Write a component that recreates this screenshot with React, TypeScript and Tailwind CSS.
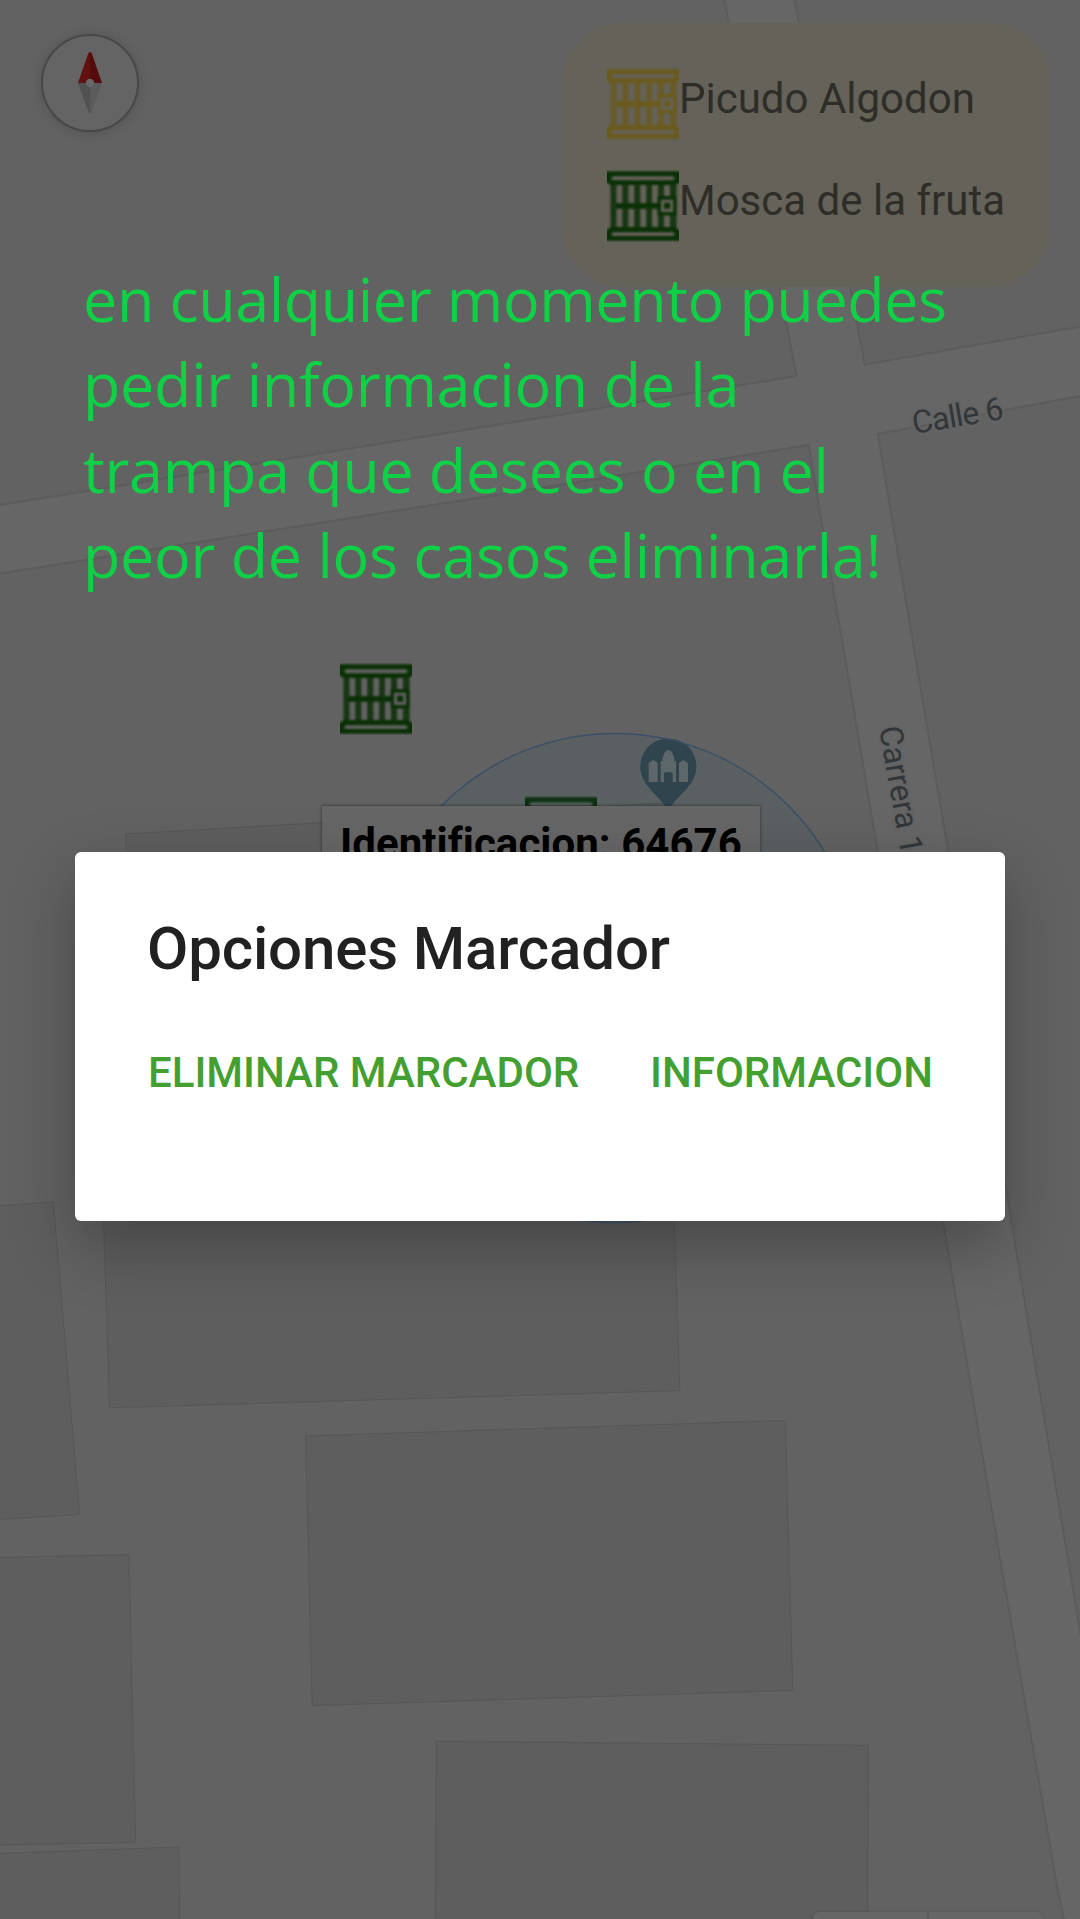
import React from 'react';

const BUILDINGS = [
  '125.4,834 662,803 680,1100 141,1131',
  '-5,1206 53.4,1202 79.5,1514.3 -5,1519.5',
  '97,1010 667,1000 679.8,1390.6 109.5,1407.8',
  '305.5,1436 785.2,1420.5 792.8,1690.4 312.3,1705.6',
  '-5,1557.6 128.8,1554.6 135.7,1842.5 -5,1845',
  '-5,1853.6 178.7,1847 180,1925 -5,1925',
  '436.3,1741.3 868.5,1745.3 867.5,1925 435.3,1925',
];

const ROAD_EDGES = [
  'M-5,505.8 L540,418 L796.5,376 L779.3,287 L724.4,0 L723,-8',
  'M793,-8 L794.4,0 L850,287 L864.7,364.7 L1085,325.6',
  'M-5,574.4 L540,488 L808.6,445 L835,600 L852.3,700 L877.7,852 L943,1221 L1000.6,1562 L1056,1880 L1065,1925',
  'M1085,395 L877.8,434 L905.7,600 L922.7,700 L948.3,852 L1006.6,1190 L1011.4,1221 L1025.5,1307 L1082,1643',
];

const ROAD_FILL =
  'M-5,505.8 L540,418 L796.5,376 L779.3,287 L724.4,0 L723,-8 L793,-8 L794.4,0 L850,287 L864.7,364.7 L1085,325.6 L1085,395 L877.8,434 L905.7,600 L922.7,700 L948.3,852 L1006.6,1190 L1011.4,1221 L1025.5,1307 L1082,1643 L1082,1925 L1065,1925 L1056,1880 L1000.6,1562 L943,1221 L877.7,852 L852.3,700 L835,600 L808.6,445 L540,488 L-5,574.4 Z';

function CityMap() {
  return (
    <svg className="absolute inset-0" width="1080" height="1919" viewBox="0 0 1080 1919" aria-hidden="true">
      <rect width="1080" height="1919" fill="#626262" />
      {BUILDINGS.map((points) => (
        <polygon key={points} points={points} fill="#5e5e5e" stroke="#575757" strokeWidth="1" />
      ))}
      <path d={ROAD_FILL} fill="#666666" />
      {ROAD_EDGES.map((d) => (
        <path key={d} d={d} fill="none" stroke="#5c5c5c" strokeWidth="2" />
      ))}
      <g
        fontFamily="Roboto, sans-serif"
        fontSize="32"
        fill="#333638"
        stroke="#646464"
        strokeWidth="5"
        strokeLinejoin="round"
        style={{ paintOrder: 'stroke' }}
      >
        <text transform="translate(914 434) rotate(-9.5)" letterSpacing="-0.8">
          Calle 6
        </text>
        <text transform="translate(879 728) rotate(80)" letterSpacing="-0.1">
          Carrera 11
        </text>
      </g>
      <path
        d="M668.3,738 C684.5,738 697,751 697,767 C697,784 680,794 672,806 V810 H664.500 V806 C656,794 639.700,784 639.700,767 C639.700,751 652,738 668.300,738 Z"
        fill="#33434a"
        stroke="#686868"
        strokeWidth="1"
      />
      <g fill="#666a6b">
        <path d="M648.7,782 V763 L653.200,760 L657.700,763 V782 Z" />
        <path d="M679,782 V763 L683.400,760 L688,763 V782 Z" />
        <path d="M660.7,782 V761 H662.500 C662.500,756 665,750 668.500,750 C672,750 674.400,756 674.400,761 H676 V782 H672.700 V773 Q668.500,771 664,773 V782 Z" />
      </g>
      <circle cx="615" cy="978" r="244.500" fill="#1f5162" fillOpacity="0.12" stroke="#3b5068" strokeWidth="1.500" />
    </svg>
  );
}

function Cage({ className, rail, bar }: { className: string; rail: string; bar: string }) {
  return (
    <svg className={className} width="72" height="72" viewBox="0 0 72 72" aria-hidden="true">
      <g style={{ filter: 'blur(0.8px)' }}>
        <path
          fill={bar}
          fillRule="evenodd"
          d="M3.500,13 H69.500 V60 H3.500 Z M9.500,14.700 V33 H15.300 V14.700 Z M21.300,14.700 V33 H27.300 V14.700 Z M33.200,14.700 V33 H39.200 V14.700 Z M45,14.700 V33 H51 V14.700 Z M57,14.700 V26.500 H63 V14.700 Z M9.500,38.700 V57 H15.300 V38.700 Z M21.300,38.700 V57 H27.300 V38.700 Z M33.200,38.700 V57 H39.200 V38.700 Z M45,38.700 V57 H51 V38.700 Z M57,45 V57 H63 V45 Z M53.800,29.500 V42 H66.300 V29.500 Z"
        />
        <path
          fill={rail}
          fillRule="evenodd"
          d="M-2,1.300 H74 V12 L68,15 H4 L-2,12 Z M6,6.300 L4,8.300 L6,10.200 H66 L68,8.300 L66,6.300 Z"
        />
        <path
          fill={rail}
          fillRule="evenodd"
          d="M4,57 H68 L74,61 V70.700 H-2 V61 Z M6,62.200 L4,64 L6,66 H66 L68,64 L66,62.200 Z"
        />
        <rect x="9" y="33.500" width="42" height="5" fill={rail} />
        <path
          fill={rail}
          fillRule="evenodd"
          d="M50.500,26 H69.500 V45.500 H50.500 Z M53.800,29.500 V42 H66.300 V29.500 Z M57,32.700 H63.200 V38.800 H57 Z"
        />
      </g>
    </svg>
  );
}

function Compass() {
  return (
    <div className="absolute top-[34px] left-[41px] flex size-[98px] items-center justify-center rounded-full border-2 border-[#484848] bg-[#646464] shadow-[0_1px_12px_rgba(0,0,0,0.16)]">
      <svg width="24" height="62" viewBox="0 0 24 62" aria-hidden="true">
        <path d="M12,0 C11,0 10.500,1 10,2 L0,31 H12 Z" fill="#621010" />
        <path d="M12,0 C13,0 13.500,1 14,2 L24,31 H12 Z" fill="#550b0b" />
        <path d="M0,31 L10.500,60 Q11,61 12,61 V31 Z" fill="#515151" />
        <path d="M24,31 L13.500,60 Q13,61 12,61 V31 Z" fill="#5b5b5b" />
        <circle cx="12" cy="31" r="4.300" fill="#666666" />
      </svg>
    </div>
  );
}

function Legend() {
  return (
    <div className="absolute top-[23px] left-[562px] flex h-[264px] w-[488px] flex-col gap-[30px] rounded-[60px] bg-[#656259] pt-[45px] pl-[45px] text-[42px] leading-[61px] text-[#2e2d28]">
      <div className="flex h-[72px] items-start whitespace-nowrap">
        <Cage className="shrink-0" rail="#6a5a1c" bar="#695b28" />
        <span>Picudo Algodon</span>
      </div>
      <div className="flex h-[72px] items-start whitespace-nowrap">
        <Cage className="shrink-0" rail="#0a3005" bar="#173612" />
        <span>Mosca de la fruta</span>
      </div>
    </div>
  );
}

export default function App() {
  return (
    <main className="relative h-[1919px] w-[1080px] overflow-hidden bg-[#626262] font-['Roboto',sans-serif]">
      <CityMap />
      <Cage className="absolute top-[663px] left-[340px]" rail="#0a3005" bar="#173612" />
      <Cage className="absolute top-[796px] left-[525px]" rail="#0b3010" bar="#17381c" />
      <div className="absolute top-[806px] left-[322px] h-[90px] w-[438px] bg-[#666666] pt-[13px] pl-[18px] text-[42px] leading-[49px] font-bold tracking-[0.04px] whitespace-nowrap text-black shadow-[0_0_3px_rgba(0,0,0,0.55)]">
        Identificacion: 64676
      </div>
      <Compass />
      <Legend />

      <div className="absolute top-[1912px] left-[813px] flex h-[20px] w-[230px] rounded-[6px] bg-[#666666] shadow-[0_0_3px_rgba(0,0,0,0.2)]">
        <span className="w-[116px] border-r-2 border-[#5a5a5a]" />
      </div>

      <p className="absolute top-[256px] left-[83px] font-['Open_Sans',sans-serif] text-[61px] leading-[85.33px] whitespace-nowrap text-[#0fd146]">
        <span className="block tracking-[-0.37px]">en cualquier momento puedes</span>
        <span className="block tracking-[-0.24px]">pedir informacion de la</span>
        <span className="block tracking-[-0.28px]">trampa que desees o en el</span>
        <span className="block tracking-[-0.26px]">peor de los casos eliminarla!</span>
      </p>

      <section
        role="dialog"
        aria-label="Opciones Marcador"
        className="absolute top-[852px] left-[75px] h-[369px] w-[930px] rounded-[6px] bg-white px-[72px] pt-[62px] shadow-[0_24px_64px_rgba(0,0,0,0.28)]"
      >
        <h1 className="text-[60px] leading-[70px] font-medium tracking-[-0.14px] whitespace-nowrap text-[#212121]">
          Opciones Marcador
        </h1>
        <div className="mt-[64px] flex justify-between pl-px text-[42px] leading-[49px] font-medium whitespace-nowrap text-[#43a030]">
          <button type="button">ELIMINAR MARCADOR</button>
          <button type="button">INFORMACION</button>
        </div>
      </section>
    </main>
  );
}
